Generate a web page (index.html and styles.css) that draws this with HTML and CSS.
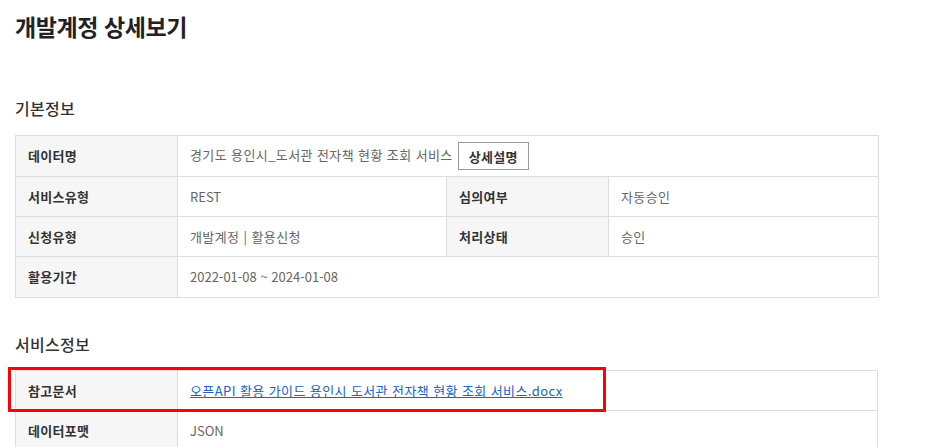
FILE: index.html
```html
<!DOCTYPE html>
<html lang="ko">
<head>
<meta charset="utf-8">
<title>개발계정 상세보기</title>
<link rel="stylesheet" href="styles.css">
</head>
<body>
<div class="page">
  <h1 class="title">개발계정 상세보기</h1>

  <h2 class="section-title first">기본정보</h2>
  <table class="info">
    <colgroup>
      <col class="c-th"><col class="c-td"><col class="c-th"><col class="c-td2">
    </colgroup>
    <tr class="r1">
      <th>데이터명</th>
      <td colspan="3">경기도 용인시_도서관 전자책 현황 조회 서비스 <button class="btn">상세설명</button></td>
    </tr>
    <tr class="r2">
      <th>서비스유형</th>
      <td class="latin">REST</td>
      <th>심의여부</th>
      <td>자동승인</td>
    </tr>
    <tr class="r3">
      <th>신청유형</th>
      <td>개발계정 | 활용신청</td>
      <th>처리상태</th>
      <td>승인</td>
    </tr>
    <tr class="r4">
      <th>활용기간</th>
      <td colspan="3" class="latin">2022-01-08 ~ 2024-01-08</td>
    </tr>
  </table>

  <h2 class="section-title second">서비스정보</h2>
  <div class="table-wrap">
    <table class="info">
      <colgroup>
        <col class="c-th"><col class="c-rest">
      </colgroup>
      <tr class="r1b">
        <th>참고문서</th>
        <td><a class="doc-link" href="#">오픈API 활용 가이드 용인시 도서관 전자책 현황 조회 서비스.docx</a></td>
      </tr>
      <tr class="r2b">
        <th>데이터포맷</th>
        <td class="latin">JSON</td>
      </tr>
    </table>
    <div class="highlight"></div>
  </div>
</div>
</body>
</html>
```

FILE: styles.css
```css
html, body {
  margin: 0;
  padding: 0;
  background: #fff;
}

body {
  font-family: "Noto Sans CJK KR", "Noto Sans", sans-serif;
  color: #333;
}

.page {
  padding: 0 15px;
  width: 863px;
}

.title {
  margin: 10px 0 0;
  font-size: 23px;
  line-height: 32px;
  font-weight: 700;
  color: #222;
  letter-spacing: -0.4px;
}

.section-title {
  margin: 0;
  font-size: 16px;
  line-height: 24px;
  font-weight: 500;
  color: #333;
  letter-spacing: 0.3px;
}

.section-title.first {
  margin-top: 54px;
  margin-bottom: 15px;
}

.section-title.second {
  margin-top: 34px;
  margin-bottom: 14px;
}

.info {
  width: 863px;
  border-collapse: collapse;
  table-layout: fixed;
  font-size: 13px;
  line-height: 18px;
}

.c-th { width: 162px; }
.c-td { width: 269px; }
.c-td2 { width: 270px; }

.info th,
.info td {
  border: 1px solid #dddddd;
  padding: 0 12px;
  text-align: left;
  vertical-align: middle;
}

.info th {
  background: #f6f6f6;
  font-weight: 700;
  color: #333;
  letter-spacing: 0.3px;
}

.info td {
  background: #fff;
  color: #666;
  letter-spacing: 0.4px;
}

.info td.latin {
  letter-spacing: 0;
}

.r1 { height: 41px; }
.r2 { height: 40px; }
.r3 { height: 40px; }
.r4 { height: 41px; }
.r1b { height: 40px; }
.r2b { height: 41px; }

.btn {
  display: inline-block;
  vertical-align: middle;
  margin-left: 1px;
  height: 28px;
  width: 71px;
  padding: 0;
  border: 1px solid #999;
  background: #fff;
  font-family: inherit;
  font-size: 13px;
  font-weight: 700;
  color: #333;
  letter-spacing: 0.3px;
  cursor: pointer;
}

.doc-link {
  color: #2063c0;
  text-decoration: underline;
}

.table-wrap {
  position: relative;
}

.highlight {
  position: absolute;
  left: -7px;
  top: -3px;
  width: 592px;
  height: 39px;
  border: 3px solid #ff0000;
  pointer-events: none;
}
```
